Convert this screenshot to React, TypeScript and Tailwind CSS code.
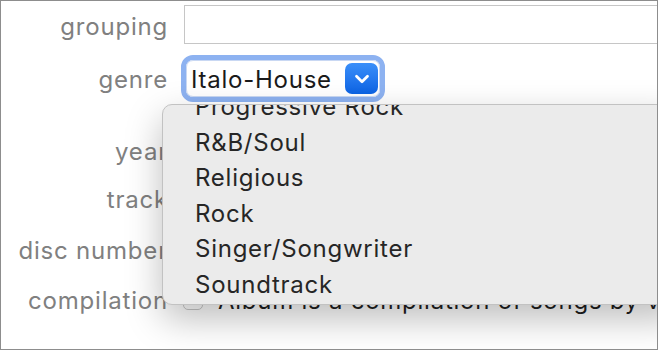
import { ChevronDown } from "lucide-react";

const font = { fontFamily: "Inter, 'Liberation Sans', sans-serif" };

const genres = [
  "Progressive Rock",
  "R&B/Soul",
  "Religious",
  "Rock",
  "Singer/Songwriter",
  "Soundtrack",
];

function Label({ children, className = "" }: { children: string; className?: string }) {
  return (
    <div
      className={`w-[167px] shrink-0 text-right text-[24px] tracking-[0.8px] text-[#808080] whitespace-nowrap ${className}`}
    >
      {children}
    </div>
  );
}

export default function App() {
  return (
    <div
      className="relative w-[658px] h-[350px] overflow-hidden bg-white border border-[#8d8d8d]"
      style={font}
    >
      <div className="flex flex-col">
        <div className="flex items-center gap-[16px] mt-[4px] h-[39px]">
          <Label className="pt-[5px]">grouping</Label>
          <div className="w-[480px] h-[39px] shrink-0 border border-[#c6c6c6] bg-white" />
        </div>

        <div className="flex items-center gap-[13px] mt-[11px] h-[47px]">
          <Label className="pt-[3px]">genre</Label>
          <div className="w-[204px] h-[47px] rounded-[12px] border-[5px] border-[#8db2f1] bg-white">
            <div className="flex items-center justify-between h-full rounded-[7px] border border-[#c9d8f3] pl-[4px] pr-[1px]">
              <span className="pt-[2px] text-[24px] tracking-[0.75px] text-[#1a1a1a]">Italo-House</span>
              <div className="flex items-center justify-center w-[33px] h-[31px] rounded-[7px] bg-gradient-to-b from-[#3a8ff9] to-[#0b63e4]">
                <ChevronDown className="w-[22px] h-[22px] text-white" strokeWidth={3} />
              </div>
            </div>
          </div>
        </div>

        <div className="flex items-center gap-[16px] mt-[30px] h-[40px]">
          <Label>year</Label>
        </div>
        <div className="flex items-center gap-[16px] mt-[8px] h-[40px]">
          <Label>track</Label>
        </div>
        <div className="flex items-center gap-[16px] mt-[10px] h-[40px]">
          <Label className="pt-[2px]">disc number</Label>
        </div>
        <div className="flex items-center gap-[15px] mt-[10px] h-[40px]">
          <Label className="pt-[2px]">compilation</Label>
          <div className="w-[20px] h-[20px] shrink-0 rounded-[5px] border border-[#c8c8c8] bg-white" />
          <span className="pt-[2px] text-[24px] tracking-[0.75px] text-[#1f1f1f] whitespace-nowrap">
            Album is a compilation of songs by various artists
          </span>
        </div>
      </div>

      <div className="absolute left-[161px] top-[103px] w-[520px] h-[201px] overflow-hidden rounded-[10px] bg-[#ebebeb] border border-[#c2c2c2] shadow-[0_14px_36px_rgba(0,0,0,0.26)]">
        <ul className="-mt-[16px]">
          {genres.map((g) => (
            <li
              key={g}
              className="h-[35.5px] leading-[35.5px] pl-[32px] text-[24px] tracking-[0.75px] text-[#262626] whitespace-nowrap"
            >
              {g}
            </li>
          ))}
        </ul>
      </div>
    </div>
  );
}
